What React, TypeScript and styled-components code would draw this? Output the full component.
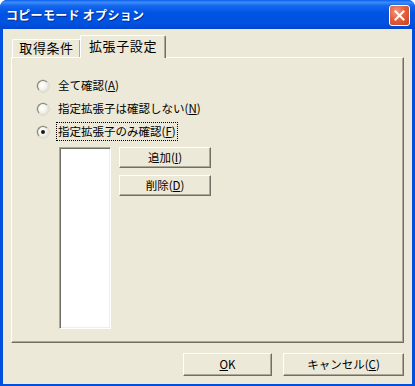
import React from 'react';
import styled, { createGlobalStyle } from 'styled-components';

const GlobalStyle = createGlobalStyle`
  html, body {
    margin: 0;
    padding: 0;
    background: #ffffff;
  }
  body {
    font-family: "Noto Sans CJK JP", "Liberation Sans", sans-serif;
  }
`;

const Window = styled.div`
  width: 415px;
  height: 386px;
  box-sizing: border-box;
  display: flex;
  flex-direction: column;
  background: #0050e0;
  border-radius: 7px 7px 0 0;
  overflow: hidden;
`;

const TitleBar = styled.div`
  height: 29px;
  flex: none;
  display: flex;
  align-items: center;
  justify-content: space-between;
  padding: 0 6px 0 6px;
  background: linear-gradient(
    #0a5eef 0%,
    #3d8cf8 8%,
    #1466ee 20%,
    #0054e3 45%,
    #0052e0 80%,
    #0046d0 100%
  );
`;

const Title = styled.span`
  color: #ffffff;
  font-size: 12px;
  font-weight: bold;
  line-height: 1;
  letter-spacing: 0.3px;
  text-shadow: 1px 1px 0 #0a2a8a;
  margin-top: 1px;
`;

const CloseButton = styled.div`
  width: 19px;
  height: 19px;
  border: 1px solid #ffffff;
  border-radius: 3px;
  background: radial-gradient(circle at 35% 30%, #f09a80 0%, #e3613e 45%, #c8401f 100%);
  display: flex;
  align-items: center;
  justify-content: center;
  margin-right: -1px;
  margin-top: 1px;
`;

const Client = styled.div`
  flex: 1;
  margin: 0 3px 3px 3px;
  background: #ece9d8;
  display: flex;
  flex-direction: column;
  padding: 6px 8px 8px 8px;
`;

const TabStrip = styled.div`
  height: 22px;
  display: flex;
  align-items: flex-end;
  padding-left: 1px;
  position: relative;
  z-index: 1;
`;

const Tab = styled.div<{ $active?: boolean }>`
  box-sizing: border-box;
  height: ${(p) => (p.$active ? '23px' : '18px')};
  margin-bottom: ${(p) => (p.$active ? '-1px' : '0')};
  margin-left: ${(p) => (p.$active ? '-1px' : '0')};
  width: ${(p) => (p.$active ? '86px' : '69px')};
  background: #ece9d8;
  border-top: 1px solid #ffffff;
  border-left: 1px solid #ffffff;
  border-right: 1px solid #716f64;
  box-shadow: inset -1px 0 0 #aca899;
  border-radius: 2px 2px 0 0;
  font-size: 13px;
  letter-spacing: 0.6px;
  color: #000000;
  display: flex;
  align-items: flex-start;
  justify-content: center;
  padding-top: ${(p) => (p.$active ? '3px' : '1px')};
  line-height: 14px;
  position: relative;
  z-index: ${(p) => (p.$active ? 2 : 1)};
`;

const Panel = styled.div`
  height: 286px;
  box-sizing: border-box;
  border-top: 1px solid #ffffff;
  border-left: 1px solid #ffffff;
  border-right: 1px solid #716f64;
  border-bottom: 1px solid #716f64;
  box-shadow: inset -1px -1px 0 #aca899;
  padding: 16px 0 0 25px;
`;

const RadioRow = styled.label`
  height: 23px;
  display: flex;
  align-items: center;
  gap: 8px;
  font-size: 11.5px;
  color: #000000;
`;

const RadioDot = styled.span<{ $checked?: boolean }>`
  width: 10px;
  height: 10px;
  flex: none;
  border-radius: 50%;
  border: 1px solid;
  border-color: #7f7c6e #e6e4da #e6e4da #7f7c6e;
  box-shadow: 0 0 0 0.5px #c4c1b2;
  background: radial-gradient(circle at 40% 40%, #ffffff 0%, #f4f3ee 50%, #d2cfbe 100%);
  display: flex;
  align-items: center;
  justify-content: center;
  &::after {
    content: '';
    width: 4px;
    height: 4px;
    border-radius: 50%;
    background: ${(p) => (p.$checked ? '#1c1c1c' : 'transparent')};
  }
`;

const RadioText = styled.span<{ $focused?: boolean }>`
  line-height: 17px;
  padding: 0 1px;
  outline: ${(p) => (p.$focused ? '1px dotted #000000' : 'none')};
  outline-offset: 0;
`;

const ListArea = styled.div`
  display: flex;
  gap: 8px;
  margin: 4px 0 0 22px;
`;

const ListBox = styled.div`
  width: 52px;
  height: 182px;
  box-sizing: border-box;
  background: #ffffff;
  border-top: 1px solid #aca899;
  border-left: 1px solid #aca899;
  border-right: 1px solid #ffffff;
  border-bottom: 1px solid #ffffff;
  box-shadow: inset 1px 1px 0 #716f64, inset -1px -1px 0 #f1efe2;
`;

const SideButtons = styled.div`
  display: flex;
  flex-direction: column;
  gap: 7px;
`;

const Button = styled.div<{ $w: number; $h: number }>`
  width: ${(p) => p.$w}px;
  height: ${(p) => p.$h}px;
  box-sizing: border-box;
  background: #ece9d8;
  border-top: 1px solid #ffffff;
  border-left: 1px solid #ffffff;
  border-right: 1px solid #716f64;
  border-bottom: 1px solid #716f64;
  box-shadow: inset -1px -1px 0 #aca899;
  display: flex;
  align-items: center;
  justify-content: center;
  font-size: 11.5px;
  color: #000000;
  line-height: 1;
`;

const Footer = styled.div`
  display: flex;
  justify-content: flex-end;
  gap: 11px;
  margin-top: 10px;
`;

const App: React.FC = () => {
  return (
    <>
      <GlobalStyle />
      <Window>
        <TitleBar>
          <Title>コピーモード オプション</Title>
          <CloseButton>
            <svg width="11" height="11" viewBox="0 0 11 11">
              <path d="M1.5 1.5 L9.5 9.5 M9.5 1.5 L1.5 9.5" stroke="#ffffff" strokeWidth="2" strokeLinecap="square" />
            </svg>
          </CloseButton>
        </TitleBar>
        <Client>
          <TabStrip>
            <Tab>取得条件</Tab>
            <Tab $active>拡張子設定</Tab>
          </TabStrip>
          <Panel>
            <RadioRow>
              <RadioDot />
              <RadioText>全て確認(<u>A</u>)</RadioText>
            </RadioRow>
            <RadioRow>
              <RadioDot />
              <RadioText>指定拡張子は確認しない(<u>N</u>)</RadioText>
            </RadioRow>
            <RadioRow>
              <RadioDot $checked />
              <RadioText $focused>指定拡張子のみ確認(<u>F</u>)</RadioText>
            </RadioRow>
            <ListArea>
              <ListBox />
              <SideButtons>
                <Button $w={92} $h={21}>追加(<u>I</u>)</Button>
                <Button $w={92} $h={21}>削除(<u>D</u>)</Button>
              </SideButtons>
            </ListArea>
          </Panel>
          <Footer>
            <Button $w={89} $h={23}><u>O</u>K</Button>
            <Button $w={121} $h={23}>キャンセル(<u>C</u>)</Button>
          </Footer>
        </Client>
      </Window>
    </>
  );
};

export default App;
